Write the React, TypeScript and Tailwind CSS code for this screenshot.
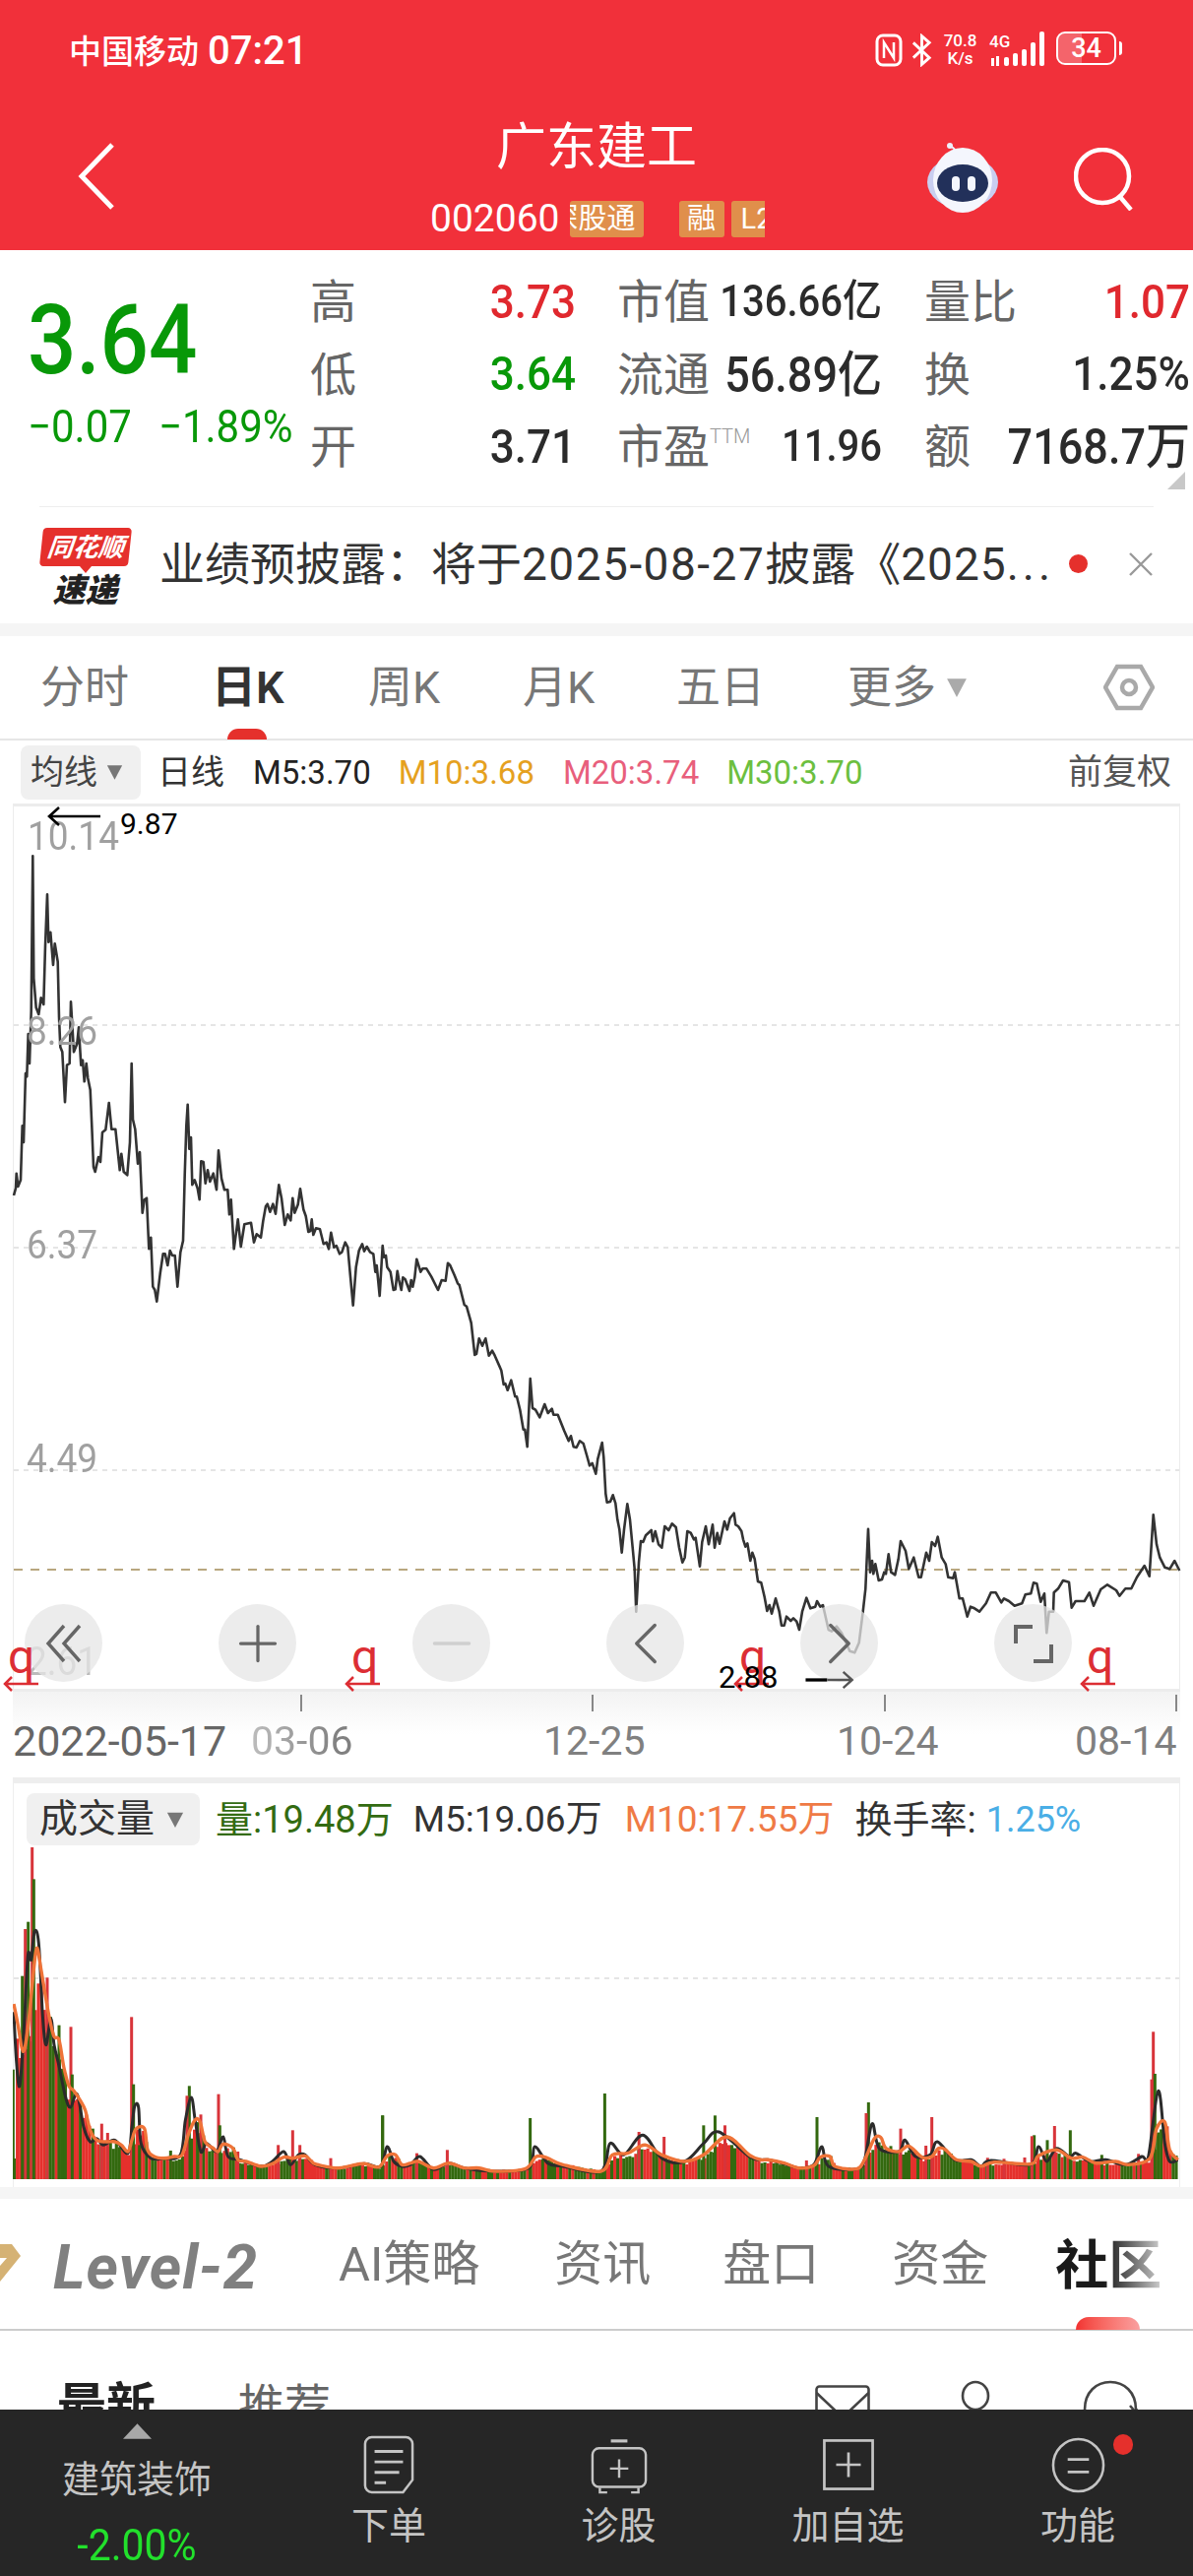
import { ChevronLeft, ChevronRight, Minus, Plus } from "lucide-react";

type Pt = [number, number];

const fromZoom = (pts: number[], ox: number, oy: number, sx = 3, sy = 3): Pt[] => {
  const out: Pt[] = [];
  for (let i = 0; i < pts.length; i += 2) out.push([ox + pts[i] / sx, oy + pts[i + 1] / sy]);
  return out;
};

const linePath = (pts: Pt[]) =>
  "M" + pts.map((p) => `${p[0].toFixed(1)} ${p[1].toFixed(1)}`).join("L");

const smoothPath = (pts: Pt[]) => {
  let d = `M${pts[0][0].toFixed(1)} ${pts[0][1].toFixed(1)}`;
  for (let i = 0; i < pts.length - 1; i++) {
    const p0 = pts[Math.max(i - 1, 0)];
    const p1 = pts[i];
    const p2 = pts[i + 1];
    const p3 = pts[Math.min(i + 2, pts.length - 1)];
    const c1x = p1[0] + (p2[0] - p0[0]) / 6;
    const c1y = p1[1] + (p2[1] - p0[1]) / 6;
    const c2x = p2[0] - (p3[0] - p1[0]) / 6;
    const c2y = p2[1] - (p3[1] - p1[1]) / 6;
    d += `C${c1x.toFixed(1)} ${c1y.toFixed(1)} ${c2x.toFixed(1)} ${c2y.toFixed(1)} ${p2[0].toFixed(1)} ${p2[1].toFixed(1)}`;
  }
  return d;
};

// price line, read off the reference in four sections
const pricePts: Pt[] = [
  ...fromZoom([12,1062,18,1040,20,995,25,1035,33,1015,38,850,42,900,48,690,52,700,56,570,60,660,65,500,70,28,73,400,80,490,88,510,95,460,103,480,108,300,114,145,118,290,124,260,132,360,137,295,146,350,150,520,154,610,160,625,168,778,174,665,182,660,186,472,195,625,205,600,210,550,217,665,222,650,227,715,233,660,238,705,245,740,250,850,255,975,260,990,270,945,276,960,282,870,292,862,302,780,310,860,322,860,335,985,340,935,347,990,358,1000,366,900,371,660,375,830,382,860,390,965,396,930,404,1115,410,1075,417,1070,424,1225,430,1190,436,1340,442,1350,448,1385,458,1300,467,1240,473,1240,481,1275,488,1230,495,1245,503,1245,511,1340,520,1235,528,1200,533,1000,538,850,542,785,547,920,552,885,556,1030,563,1015,572,1040,578,1075,583,958,590,960,596,1025,603,985,610,1020,620,995,630,1045,636,925,645,1010,654,1045,664,1045,669,1120,674,1075,683,1225,695,1135,704,1218,715,1150,735,1145,744,1205,752,1180,765,1190,772,1140,780,1095], 10, 860),
  ...fromZoom([155,128,163,152,172,128,180,158,190,70,198,110,208,192,217,160,226,178,232,110,238,155,248,130,255,82,265,145,272,165,280,213,286,210,290,175,295,222,303,202,315,205,326,250,335,245,342,265,349,215,358,260,365,255,375,280,382,275,392,245,400,260,408,350,416,437,425,320,434,270,444,250,450,272,458,258,468,275,478,280,484,335,488,315,497,408,506,255,510,290,516,285,520,320,530,335,539,390,545,388,551,332,556,360,563,390,568,352,575,358,588,393,593,360,598,380,604,352,610,296,622,335,628,325,640,325,655,350,675,390,686,360,698,362,705,308,712,315,725,345,735,370,740,375,755,435,762,440,776,490,787,588,792,585,800,538,810,560,820,538,830,590,840,575,848,590,868,635,875,678,880,675,887,695,898,665,910,715,915,715,925,755,935,815,940,815,947,868,956,660,963,750,972,755,985,778,1000,738,1010,765,1022,752,1027,770,1040,770,1060,820,1073,850,1080,835,1088,868,1097,870,1107,850,1118,858,1130,900], 220, 1180),
  ...fromZoom([297,325,305,318,316,350,322,305,335,255,340,300,346,410,350,437,360,435,368,415,376,440,382,490,388,520,395,590,402,520,412,442,420,490,428,575,434,640,439,770,447,620,453,555,460,558,468,538,485,522,490,556,497,525,507,565,517,575,526,510,538,522,548,502,560,513,570,575,580,620,587,605,595,525,605,530,615,550,620,545,633,632,640,558,651,510,660,565,672,505,678,575,686,530,693,563,708,495,716,520,725,485,737,470,742,505,750,510,760,525,765,550,772,572,778,562,787,615,793,590,800,610,810,678,820,682,830,725,838,768,845,750,852,776,864,730,875,770,882,812,890,812,897,785,910,798,918,790,928,800,936,825,945,770,958,728,970,760,985,755,990,738,1000,755,1008,750], 500, 1380),
  ...fromZoom([125,465,135,470,150,455,165,475,190,530,205,535,218,505,230,410,238,340,246,158,252,290,258,255,262,295,268,265,278,315,288,312,295,290,300,295,308,235,316,290,328,298,338,250,345,195,360,225,370,280,385,245,400,305,407,305,423,230,432,255,440,198,450,210,458,182,470,245,482,265,490,305,505,308,510,290,524,370,534,370,548,425,558,395,570,400,585,410,605,385,620,352,635,352,652,382,660,370,675,378,692,392,715,385,725,358,742,355,750,322,760,325,772,380,783,355,790,475,797,410,810,410,812,352,825,340,840,315,858,320,866,398,878,378,905,378,920,352,933,392,955,342,975,328,1002,345,1012,362,1030,340,1048,340,1065,305,1088,270,1103,302,1115,115,1125,205,1135,245,1150,275,1165,280,1180,255,1195,285], 800, 1500),
];

const maOrange: Pt[] = [
  ...fromZoom([12,525,25,590,40,670,55,600,70,450,82,355,95,420,110,510,122,575,135,625,150,635,165,720,180,775,195,790,215,820,230,850,245,910,265,940,295,945,320,945,340,955,360,975,372,940,385,905,410,905,420,970,440,990,470,995,500,990,525,985,545,920,565,878,580,885,595,945,620,965,635,975,650,952,680,965,695,1000,720,1005,765,1020,800,1012,835,992,865,995,900,988,925,1010,950,1018,1000,1025,1040,1018,1080,1012,1125,1022,1150,988,1175,985,1195,1015], 10, 1860),
  ...fromZoom([540,1190,550,1185,570,1205,590,1190,610,1205,630,1205,650,1215,690,1208,705,1170,720,1175,740,1195,790,1215,805,1165,825,1160,848,1135,870,1165,900,1185,925,1165,955,1110,985,1165,1000,1180], 0, 1800, 1.294),
  ...fromZoom([0,490,50,500,95,515,140,508,160,482,190,480,205,510,270,518,295,490,325,425,345,422,360,455,400,465,430,448,470,482,500,480,520,455,540,458,575,490,620,495,650,510,690,497,800,503,825,478,880,460,925,485,960,482,1000,500,1060,495,1100,505,1165,485,1185,395,1210,375,1225,460,1250,490], 780, 2030),
];

const maBlack: Pt[] = [
  ...fromZoom([12,550,20,700,30,775,42,620,55,380,65,390,75,305,88,340,100,560,110,650,125,570,135,650,150,715,170,810,185,840,205,800,225,900,245,945,265,935,285,955,320,940,360,980,372,900,380,838,392,840,400,950,430,995,470,995,520,985,535,880,553,810,565,880,582,975,600,950,630,975,650,930,665,990,700,1000,765,1020,800,1005,835,975,855,1015,880,985,900,985,930,1015,1000,1025,1080,1012,1130,1020,1150,960,1170,1005,1195,1020], 10, 1860),
  ...fromZoom([540,1195,552,1170,570,1210,590,1190,610,1205,650,1215,695,1205,703,1140,720,1190,740,1200,790,1215,802,1130,820,1165,845,1105,870,1175,900,1185,925,1130,945,1095,985,1170,1000,1180], 0, 1800, 1.294),
  ...fromZoom([0,490,50,502,95,515,140,505,165,450,185,510,270,518,295,490,318,380,340,455,400,465,418,430,450,480,495,475,517,435,570,490,620,490,650,510,680,492,800,505,825,450,850,495,880,455,920,480,940,470,980,495,1030,490,1090,505,1140,480,1160,480,1190,280,1210,440,1225,495,1250,490], 780, 2030),
];

const RED = "#e5302c";
const GREEN = "#33690f";
const VOL_BASE = 2213;

const topAt = (x: number) => {
  for (let i = 0; i < maOrange.length - 1; i++) {
    const a = maOrange[i];
    const b = maOrange[i + 1];
    if (x >= a[0] && x <= b[0]) return a[1] + ((b[1] - a[1]) * (x - a[0])) / (b[0] - a[0] || 1);
  }
  return VOL_BASE - 20;
};

// plain volume bars follow the average line, with a fixed pseudo random jitter
let seed = 71;
const rnd = () => {
  seed = (seed * 16807) % 2147483647;
  return seed / 2147483647;
};
const volBars = Array.from({ length: 388 }, (_, i) => {
  const x = 13 + i * 3.05;
  const top = topAt(x);
  const y = top + rnd() * (VOL_BASE - top) * 0.24 - 1;
  return { x, y, color: rnd() > 0.48 ? RED : GREEN };
});

const spikeGroups: { o: [number, number, number]; s: (number | string)[] }[] = [
  { o: [10, 1860, 3], s: [68,48,"r",73,145,"g",56,275,"g",47,297,"r",114,445,"r",38,440,"g",150,590,"g",186,595,"r",371,565,"r",377,770,"g",547,775,"g",540,805,"r",582,862,"r",636,800,"r",640,895,"g",280,890,"r",253,905,"g",298,918,"r",818,955,"r",862,910,"r",884,955,"r",1136,865,"g",978,995,"r",190,740,"g",10,725,"g",490,972,"g",695,975,"r",395,955,"g"] },
  { o: [0, 1800, 1.294], s: [503,1045,"g",548,1160,"r",588,1150,"r",697,1053,"g",795,978,"g",840,1095,"r",873,1110,"r",940,1045,"g",953,1075,"r",925,1075,"g"] },
  { o: [780, 2030, 3], s: [150,360,"g",118,492,"r",307,315,"g",300,348,"r",405,395,"r",500,360,"r",482,447,"r",375,448,"g",812,415,"g",805,418,"r",852,430,"g",874,387,"r",922,400,"g",1175,100,"r",1180,228,"g",1170,245,"r",1018,475,"g",1130,472,"r",670,484,"r",720,487,"r",783,483,"r"] },
];

const spikes = spikeGroups.flatMap(({ o, s }) => {
  const out: { x: number; y: number; color: string }[] = [];
  for (let i = 0; i < s.length; i += 3) {
    const zy = s[i + 1] as number;
    out.push({
      x: o[0] + (s[i] as number) / o[2] - 1.5,
      y: o[1] + zy / (o[2] === 1.294 ? 3 : o[2]),
      color: s[i + 2] === "r" ? "#d8343a" : GREEN,
    });
  }
  return out;
});

function Caret({ className }: { className: string }) {
  return (
    <svg viewBox="0 0 20 20" className={className}>
      <path d="M1 2h18L10 19z" fill="currentColor" />
    </svg>
  );
}

function StatusBar() {
  return (
    <div className="flex h-[100px] items-start justify-between pl-[70px] pr-[72px] pt-[32px] text-white">
      <div className="flex items-center gap-[9px] text-[33px] font-medium leading-none">
        <span>中国移动</span>
        <span className="text-[40px]">07:21</span>
      </div>
      <div className="flex items-start">
        <svg viewBox="0 0 28 34" className="mt-[2px] h-[34px] w-[28px]" fill="none" stroke="white" strokeWidth="3">
          <rect x="2" y="2" width="24" height="30" rx="6" />
          <path d="M9 25V9l10 16V9" strokeWidth="2.5" />
        </svg>
        <svg viewBox="0 0 24 34" className="ml-[8px] mt-[2px] h-[34px] w-[23px]" fill="none" stroke="white" strokeWidth="3">
          <path d="M3 9l17 16-8 7V2l8 7L3 25" />
        </svg>
        <div className="ml-[7px] flex w-[41px] flex-col items-center text-[17px] font-medium leading-[18px]">
          <span>70.8</span>
          <span>K/s</span>
        </div>
        <div className="relative ml-[9px] h-[36px] w-[56px]">
          <span className="absolute left-0 top-[1px] text-[17px] font-medium leading-[18px]">4G</span>
          <svg viewBox="0 0 56 36" className="h-[36px] w-[56px]" fill="white">
            <rect x="2" y="27" width="3" height="8" />
            <rect x="7" y="25" width="3" height="10" />
            <rect x="15" y="26" width="5" height="9" rx="2" />
            <rect x="24" y="22" width="5" height="13" rx="2" />
            <rect x="33" y="18" width="5" height="17" rx="2" />
            <rect x="42" y="11" width="5" height="24" rx="2" />
            <rect x="51" y="0" width="5" height="35" rx="2" />
          </svg>
        </div>
        <div className="relative ml-[12px] flex h-[34px] w-[61px] items-center justify-center overflow-hidden rounded-[9px] border-2 border-white text-[27px] font-medium leading-none">
          <div className="absolute inset-y-0 left-0 w-[24px] bg-white/25" />
          <span className="relative">34</span>
        </div>
        <div className="ml-[3px] mt-[10px] h-[14px] w-[3px] rounded-r bg-white" />
      </div>
    </div>
  );
}

function NavBar() {
  return (
    <div className="flex h-[154px] items-start text-white">
      <div className="flex w-[506px] pl-[78px] pt-[44px]">
        <svg viewBox="0 0 40 70" className="h-[70px] w-[40px]" fill="none" stroke="white" strokeWidth="5">
          <path d="M36 3L5 35l31 32" />
        </svg>
      </div>
      <div className="relative flex w-[200px] flex-col items-center">
        <span className="mt-[24px] whitespace-nowrap text-[51px] leading-none">广东建工</span>
        <div className="absolute left-[-69px] top-[103px] flex items-center">
          <span className="text-[39px] leading-none">002060</span>
          <div className="ml-[10px] flex h-[37px] w-[75px] items-center justify-end overflow-hidden rounded-[3px] bg-[#e08f4b] text-[29px] leading-none">
            <span className="whitespace-nowrap pr-[8px]">深股通</span>
          </div>
          <div className="ml-[36px] flex h-[37px] w-[46px] items-center justify-center rounded-[3px] bg-[#e08f4b] text-[29px] leading-none">融</div>
          <div className="ml-[7px] flex h-[37px] w-[34px] items-center overflow-hidden rounded-l-[3px] bg-[#e08f4b] pl-[10px] text-[29px] leading-none">L2</div>
        </div>
      </div>
      <div className="ml-[235px] mt-[45px]">
        <svg viewBox="0 0 74 72" className="h-[72px] w-[74px]">
          <circle cx="24" cy="3" r="3" fill="#eef0fb" />
          <path d="M25 4c4 1 5 4 6 8" stroke="#eef0fb" strokeWidth="2" fill="none" />
          <ellipse cx="37" cy="40" rx="36" ry="27" fill="#c9cef0" />
          <ellipse cx="37" cy="38" rx="30" ry="33" fill="#f4f6fd" />
          <ellipse cx="37" cy="41" rx="26" ry="19" fill="#22305a" />
          <rect x="26" y="34" width="8" height="15" rx="4" fill="#f4f6fd" />
          <rect x="42" y="34" width="8" height="15" rx="4" fill="#f4f6fd" />
        </svg>
      </div>
      <div className="ml-[76px] mt-[50px]">
        <svg viewBox="0 0 62 64" className="h-[64px] w-[62px]" fill="none" stroke="white" strokeWidth="4.5">
          <ellipse cx="29" cy="29" rx="27" ry="27" />
          <path d="M47 50l11 13" />
        </svg>
      </div>
    </div>
  );
}

function QuoteCell({ label, value, color, size = "text-[44px]" }: { label: React.ReactNode; value: string; color: string; size?: string }) {
  return (
    <div className="flex h-[73.5px] items-center justify-between">
      <span className="whitespace-nowrap text-[47px] leading-none text-[#666666]">{label}</span>
      <span className={`scale-y-[1.1] whitespace-nowrap font-medium leading-none ${size} ${color}`}>{value}</span>
    </div>
  );
}

function Quote() {
  const dark = "text-[#2b2b2b]";
  return (
    <div className="relative flex h-[260px] bg-white pt-[16px]">
      <div className="flex w-[315px] flex-col pl-[28px]">
        <span className="mt-[32px] origin-left scale-y-[1.14] text-[87px] font-medium leading-none text-[#089808]">3.64</span>
        <div className="mt-[24px] flex gap-[27px] whitespace-nowrap text-[42px] leading-none text-[#089808]">
          <span className="scale-y-[1.1]">−0.07</span>
          <span className="scale-y-[1.1]">−1.89%</span>
        </div>
      </div>
      <div className="w-[270px]">
        <QuoteCell label="高" value="3.73" color="text-[#e0282e]" />
        <QuoteCell label="低" value="3.64" color="text-[#089808]" />
        <QuoteCell label="开" value="3.71" color={dark} />
      </div>
      <div className="ml-[42px] w-[269px]">
        <QuoteCell label="市值" value="136.66亿" color={dark} size="text-[40px]" />
        <QuoteCell label="流通" value="56.89亿" color={dark} size="text-[45px]" />
        <QuoteCell
          label={
            <span className="flex items-start">
              市盈<span className="mt-[3px] text-[20px] font-light leading-none text-[#999999]">TTM</span>
            </span>
          }
          value="11.96"
          color={dark}
          size="text-[40px]"
        />
      </div>
      <div className="ml-[43px] w-[270px]">
        <QuoteCell label="量比" value="1.07" color="text-[#e0282e]" />
        <QuoteCell label="换" value="1.25%" color={dark} />
        <QuoteCell label="额" value="7168.7万" color={dark} size="text-[45px]" />
      </div>
      <svg viewBox="0 0 18 18" className="absolute bottom-[17px] right-[8px] h-[18px] w-[18px]">
        <path d="M18 0v18H0z" fill="#c8c8c8" />
      </svg>
    </div>
  );
}

function NewsRow() {
  return (
    <div className="flex h-[118px] items-start bg-white px-[40px]">
      <div className="mt-[21px] flex w-[93px] flex-col items-center">
        <div className="flex h-[39px] w-[90px] -skew-x-6 items-center justify-center rounded-[4px] bg-[#e5302c] text-[26px] font-bold italic leading-none text-white">
          同花顺
        </div>
        <div className="h-0 w-0 border-x-[6px] border-t-[7px] border-x-transparent border-t-[#e5302c]" />
        <div className="mt-[1px] text-[33px] font-black italic leading-none text-[#222222]">速递</div>
      </div>
      <div className="ml-[29px] mt-[35px] w-[905px] whitespace-nowrap text-[46px] leading-none text-[#333333]">
        业绩预披露：将于<span className="tracking-[1.5px]">2025-08-27</span>披露《<span className="tracking-[1px]">2025</span>
        <span className="tracking-[4px]">...</span>
      </div>
      <div className="ml-[19px] mt-[48px] h-[19px] w-[19px] shrink-0 rounded-full bg-[#e5302c]" />
      <svg viewBox="0 0 24 24" className="ml-[42px] mt-[46px] h-[24px] w-[24px] shrink-0" fill="none" stroke="#999999" strokeWidth="2.4">
        <path d="M1 1l22 22M23 1L1 23" />
      </svg>
    </div>
  );
}

function PeriodTabs() {
  return (
    <div className="relative grid h-[106px] grid-cols-[174px_159px_157px_156px_174px_260px_auto] items-center border-b-2 border-[#e6e6e6] bg-white pl-[41px] text-[45px] leading-none text-[#777777]">
      <span>分时</span>
      <span className="relative font-semibold text-[#333333]">
        日K
        <span className="absolute left-[16px] top-[64px] h-[11px] w-[40px] rounded-t-full bg-[#e5302c]" />
      </span>
      <span>周K</span>
      <span>月K</span>
      <span>五日</span>
      <span className="flex items-center">
        更多
        <Caret className="ml-[9px] h-[22px] w-[24px] text-[#aaaaaa]" />
      </span>
      <svg viewBox="0 0 52 48" className="h-[48px] w-[52px]" fill="none" stroke="#a9a9a9" strokeWidth="4.5">
        <path d="M14 3h24l12 21-12 21H14L2 24z" />
        <circle cx="26" cy="24" r="7" />
      </svg>
    </div>
  );
}

function LegendRow() {
  return (
    <div className="flex h-[64px] items-center bg-white text-[33px] leading-none text-[#222222]">
      <div className="ml-[21px] flex h-[55px] w-[122px] items-center rounded-[8px] bg-[#f0f0f0] pl-[10px] text-[#444444]">
        <span className="text-[34px]">均线</span>
        <Caret className="ml-[9px] h-[18px] w-[17px] text-[#777777]" />
      </div>
      <span className="ml-[17px] text-[34px] text-[#333333]">日线</span>
      <span className="ml-[29px]">M5:3.70</span>
      <span className="ml-[28px] text-[#e5a11f]">M10:3.68</span>
      <span className="ml-[29px] text-[#e85f7c]">M20:3.74</span>
      <span className="ml-[28px] text-[#6cbf3f]">M30:3.70</span>
      <span className="ml-auto mr-[22px] text-[35px] text-[#555555]">前复权</span>
    </div>
  );
}

function RedMark({ arrowClass, textClass }: { arrowClass: string; textClass: string }) {
  return (
    <>
      <span className={`absolute text-[48px] leading-none text-[#dc2e34] ${textClass}`}>q</span>
      <svg viewBox="0 0 36 16" className={`absolute h-[16px] w-[36px] ${arrowClass}`} fill="none" stroke="#dc2e34" strokeWidth="2.5">
        <path d="M36 8H2M9 1L2 8l7 7" />
      </svg>
    </>
  );
}

function FullscreenIcon() {
  return (
    <svg viewBox="0 0 42 42" className="h-[42px] w-[42px]" fill="none" stroke="#666666" strokeWidth="4">
      <path d="M20 4H3v17M39 22v17H21" />
    </svg>
  );
}

function PriceChart() {
  return (
    <div className="relative h-[902px] bg-white">
      <div className="absolute inset-y-0 left-[13px] right-[13px] border-x border-t-[3px] border-[#ececec] border-b-[3px]" />
      <svg viewBox="0 816 1212 902" className="absolute inset-0 h-full w-full">
        <g stroke="#dddddd" strokeWidth="1.5" strokeDasharray="5 5">
          <path d="M14 1041H1198" />
          <path d="M14 1267H1198" />
          <path d="M14 1493H1198" />
        </g>
        <path d="M14 1594H1198" stroke="#b8a77f" strokeWidth="2" strokeDasharray="9 8" />
        <path d={linePath(pricePts)} fill="none" stroke="#333333" strokeWidth="2.6" strokeLinejoin="round" />
      </svg>
      <span className="absolute left-[28px] top-[15px] scale-y-[1.1] text-[37px] leading-none text-[#a0a0a0]">10.14</span>
      <span className="absolute left-[27px] top-[213px] scale-y-[1.1] text-[37px] leading-none text-[#a0a0a0]">8.26</span>
      <span className="absolute left-[27px] top-[430px] scale-y-[1.1] text-[37px] leading-none text-[#a0a0a0]">6.37</span>
      <span className="absolute left-[27px] top-[647px] scale-y-[1.1] text-[37px] leading-none text-[#a0a0a0]">4.49</span>
      <span className="absolute left-[27px] top-[853px] scale-y-[1.1] text-[37px] leading-none text-[#bbbbbb]">2.61</span>
      <svg viewBox="0 0 54 22" className="absolute left-[48px] top-[2px] h-[22px] w-[54px]" fill="none" stroke="#000000" strokeWidth="2.6">
        <path d="M54 11H2M12 2L2 11l10 9" />
      </svg>
      <span className="absolute left-[122px] top-[6px] text-[30px] leading-none text-black">9.87</span>
      <div className="absolute left-[25px] top-[813px] flex gap-[118px]">
        <div className="flex h-[79px] w-[79px] items-center justify-center rounded-full bg-[#e5e5e5]/75">
          <svg viewBox="0 0 40 40" className="h-[40px] w-[40px]" fill="none" stroke="#666666" strokeWidth="3.4">
            <path d="M20 2L4 20l16 18M36 2L20 20l16 18" />
          </svg>
        </div>
        <div className="flex h-[79px] w-[79px] items-center justify-center rounded-full bg-[#e5e5e5]/75 text-[#666666]">
          <Plus size={60} strokeWidth={1.3} className="shrink-0" />
        </div>
        <div className="flex h-[79px] w-[79px] items-center justify-center rounded-full bg-[#e5e5e5]/75 text-[#cfcfcf]">
          <Minus size={60} strokeWidth={1.4} className="shrink-0" />
        </div>
        <div className="flex h-[79px] w-[79px] items-center justify-center rounded-full bg-[#e5e5e5]/75 text-[#666666]">
          <ChevronLeft size={74} strokeWidth={1.1} className="shrink-0" />
        </div>
        <div className="flex h-[79px] w-[79px] items-center justify-center rounded-full bg-[#e5e5e5]/75 text-[#666666]">
          <ChevronRight size={74} strokeWidth={1.1} className="shrink-0" />
        </div>
        <div className="flex h-[79px] w-[79px] items-center justify-center rounded-full bg-[#e5e5e5]/75">
          <FullscreenIcon />
        </div>
      </div>
      <RedMark textClass="left-[8px] top-[843px]" arrowClass="left-[3px] top-[886px]" />
      <RedMark textClass="left-[357px] top-[843px]" arrowClass="left-[350px] top-[886px]" />
      <RedMark textClass="left-[751px] top-[843px]" arrowClass="left-[745px] top-[886px]" />
      <RedMark textClass="left-[1104px] top-[843px]" arrowClass="left-[1097px] top-[886px]" />
      <span className="absolute left-[730px] top-[872px] text-[31px] leading-none text-black">2.88</span>
      <svg viewBox="0 0 54 22" className="absolute left-[816px] top-[880px] h-[20px] w-[54px]" fill="none" stroke="#000000" strokeWidth="2.6">
        <path d="M0 11h24" strokeWidth="3.6" />
        <path d="M24 11h28M42 2l10 9-10 9" stroke="#555555" />
      </svg>
    </div>
  );
}

function DateAxis() {
  return (
    <div className="mx-[13px] flex h-[87px] flex-col bg-gradient-to-b from-[#f3f3f3] via-white to-white">
      <div className="grid h-[22px] grid-cols-[294px_296px_297px_296px]">
        <span className="mb-[2px] mt-[3px] border-r-2 border-[#888888]" />
        <span className="mb-[2px] mt-[3px] border-r-2 border-[#888888]" />
        <span className="mb-[2px] mt-[3px] border-r-2 border-[#888888]" />
        <span className="mb-[2px] mt-[3px] border-r-2 border-[#888888]" />
      </div>
      <div className="mt-[7px] flex items-center whitespace-nowrap text-[41px] leading-none text-[#808080]">
        <span className="w-[242px] text-[43px] text-[#666666]">2022-05-17</span>
        <span className="w-[297px] bg-gradient-to-r from-[#bdbdbd] to-[#808080] to-[30%] bg-clip-text text-transparent">03-06</span>
        <span className="w-[298px]">12-25</span>
        <span className="w-[242px]">10-24</span>
        <span>08-14</span>
      </div>
    </div>
  );
}

function VolumePanel() {
  return (
    <div className="relative mx-[13px] h-[416px] border-x border-t-[6px] border-[#eeeeee]">
      <div className="relative z-10 flex h-[66px] items-center pl-[13px] pt-[7px] leading-none text-[#333333]">
        <div className="flex h-[53px] w-[176px] items-center rounded-[8px] bg-[#f0f0f0] pl-[13px]">
          <span className="whitespace-nowrap text-[39px]">成交量</span>
          <Caret className="ml-[12px] h-[18px] w-[18px] text-[#777777]" />
        </div>
        <span className="ml-[16px] whitespace-nowrap text-[38px] text-[#336b12]">量:19.48万</span>
        <span className="ml-[20px] whitespace-nowrap text-[37px]">M5:19.06万</span>
        <span className="ml-[23px] whitespace-nowrap text-[37px] text-[#ef7a45]">M10:17.55万</span>
        <span className="ml-[21px] whitespace-nowrap text-[38px]">换手率:</span>
        <span className="ml-[10px] text-[36px] text-[#4aaee6]">1.25%</span>
      </div>
      <svg viewBox="13 1805 1186 416" className="absolute left-[-1px] top-[-6px] h-[416px] w-[1186px]">
        <path d="M14 2009H1198" stroke="#dddddd" strokeWidth="1.5" strokeDasharray="5 5" />
        {volBars.map((b) => (
          <rect key={b.x} x={b.x} y={b.y} width={3.2} height={Math.max(VOL_BASE - b.y, 1)} fill={b.color} />
        ))}
        {spikes.map((s) => (
          <rect key={`${s.x}-${s.y}`} x={s.x} y={s.y} width={3} height={VOL_BASE - s.y} fill={s.color} />
        ))}
        <path d={smoothPath(maBlack)} fill="none" stroke="#2b2b2b" strokeWidth="3" />
        <path d={smoothPath(maOrange)} fill="none" stroke="#ef7338" strokeWidth="3.4" />
      </svg>
    </div>
  );
}

function DetailTabs() {
  return (
    <div className="flex h-[134px] items-start border-b-2 border-[#cccccc] bg-white pt-[42px] leading-none text-[#777777]">
      <svg viewBox="0 0 22 38" className="mt-[4px] h-[38px] w-[22px]">
        <path d="M0 0h12l9 12-21 26z" fill="#d5b274" />
        <path d="M0 14h7l-7 8z" fill="#ffffff" />
      </svg>
      <span className="ml-[32px] mt-[-3px] w-[213px] whitespace-nowrap text-[62px] font-bold italic tracking-[1px] text-[#808080]">Level-2</span>
      <span className="ml-[77px] whitespace-nowrap text-[49px]">AI策略</span>
      <span className="ml-[76px] whitespace-nowrap text-[49px]">资讯</span>
      <span className="ml-[73px] whitespace-nowrap text-[49px]">盘口</span>
      <span className="ml-[74px] whitespace-nowrap text-[49px]">资金</span>
      <span className="relative ml-[68px] whitespace-nowrap text-[54px] font-bold">
        <span className="bg-gradient-to-r from-[#1a1a1a] from-45% to-[#cfcfcf] bg-clip-text text-transparent">社区</span>
        <span className="absolute left-[21px] top-[78px] h-[13px] w-[65px] rounded-t-full bg-gradient-to-r from-[#f23030] to-[#f9a0a0]" />
      </span>
    </div>
  );
}

function CommunityPeek() {
  return (
    <div className="flex h-[80px] items-start overflow-hidden bg-white">
      <span className="ml-[58px] mt-[52px] text-[50px] font-bold leading-none text-[#222222]">最新</span>
      <span className="ml-[84px] mt-[53px] text-[47px] leading-none text-[#666666]">推荐</span>
      <svg viewBox="0 0 56 50" className="ml-[492px] mt-[55px] h-[50px] w-[56px]" fill="none" stroke="#444444" strokeWidth="2.6">
        <rect x="1.5" y="1.5" width="53" height="46" rx="3" />
        <path d="M1.5 8L28 33 54.5 8" />
      </svg>
      <svg viewBox="0 0 30 60" className="ml-[92px] mt-[50px] h-[60px] w-[30px]" fill="none" stroke="#444444" strokeWidth="2.6">
        <ellipse cx="15" cy="16" rx="13" ry="14" />
        <path d="M2 50c2-12 24-12 26 0" />
      </svg>
      <svg viewBox="0 0 56 60" className="ml-[94px] mt-[50px] h-[60px] w-[56px]" fill="none" stroke="#444444" strokeWidth="2.6">
        <path d="M2 30C2 12 14 2 28 2s26 10 26 28" />
        <path d="M48 26l6 7 6-7" />
      </svg>
    </div>
  );
}

function BottomBar() {
  return (
    <div className="grid h-[169px] grid-cols-[278px_234px_233px_233px_234px] bg-[#262626] text-[38px] leading-none text-[#c4c4c4]">
      <div className="flex flex-col items-center">
        <svg viewBox="0 0 30 16" className="mt-[14px] h-[16px] w-[29px]">
          <path d="M15 0l15 16H0z" fill="#a8a8a8" />
        </svg>
        <span className="mt-[22px] whitespace-nowrap">建筑装饰</span>
        <span className="mt-[28px] scale-y-[1.1] whitespace-nowrap text-[41px] text-[#22e02c]">-2.00%</span>
      </div>
      <div className="flex flex-col items-center">
        <svg viewBox="0 0 54 62" className="mt-[26px] h-[60px] w-[52px]" fill="none" stroke="#c4c4c4" strokeWidth="2.6">
          <path d="M9 2h36a7 7 0 0 1 7 7v38L42 60H9a7 7 0 0 1-7-7V9a7 7 0 0 1 7-7z" />
          <path d="M12 17h30M12 28h30M12 39h26M12 50h12" strokeWidth="3" />
        </svg>
        <span className="mt-[13px] whitespace-nowrap">下单</span>
      </div>
      <div className="flex flex-col items-center">
        <svg viewBox="0 0 62 60" className="mt-[30px] h-[56px] w-[62px]" fill="none" stroke="#c4c4c4" strokeWidth="2.6">
          <path d="M22 2h18" strokeWidth="3.4" />
          <rect x="2" y="10" width="58" height="42" rx="7" />
          <path d="M31 22v20M21 32h20M10 53v5h8M52 53v5h-8" />
        </svg>
        <span className="mt-[13px] whitespace-nowrap">诊股</span>
      </div>
      <div className="flex flex-col items-center">
        <svg viewBox="0 0 54 54" className="mt-[30px] h-[52px] w-[52px]" fill="none" stroke="#c4c4c4" strokeWidth="2.8">
          <rect x="1.5" y="1.5" width="51" height="51" />
          <path d="M27 14v26M14 27h26" />
        </svg>
        <span className="mt-[17px] whitespace-nowrap">加自选</span>
      </div>
      <div className="relative flex flex-col items-center">
        <svg viewBox="0 0 56 58" className="mt-[28px] h-[57px] w-[55px]" fill="none" stroke="#c4c4c4" strokeWidth="2.6">
          <ellipse cx="28" cy="29" rx="26" ry="27" />
          <path d="M17 23h22M17 36h22" strokeWidth="3" />
        </svg>
        <span className="mt-[14px] whitespace-nowrap">功能</span>
        <div className="absolute left-[153px] top-[25px] h-[21px] w-[20px] rounded-full bg-[#e5302c]" />
      </div>
    </div>
  );
}

export default function App() {
  return (
    <div className="flex h-[2616px] w-[1212px] flex-col overflow-hidden bg-white font-['Roboto','Noto_Sans_CJK_SC',sans-serif]">
      <div className="h-[254px] shrink-0 bg-[#f1303a]">
        <StatusBar />
        <NavBar />
      </div>
      <Quote />
      <div className="mx-[40px] h-[1px] shrink-0 bg-[#eeeeee]" />
      <NewsRow />
      <div className="h-[13px] shrink-0 bg-[#f5f5f5]" />
      <PeriodTabs />
      <LegendRow />
      <PriceChart />
      <DateAxis />
      <VolumePanel />
      <div className="h-[12px] shrink-0 bg-[#f5f5f5]" />
      <DetailTabs />
      <CommunityPeek />
      <BottomBar />
    </div>
  );
}
